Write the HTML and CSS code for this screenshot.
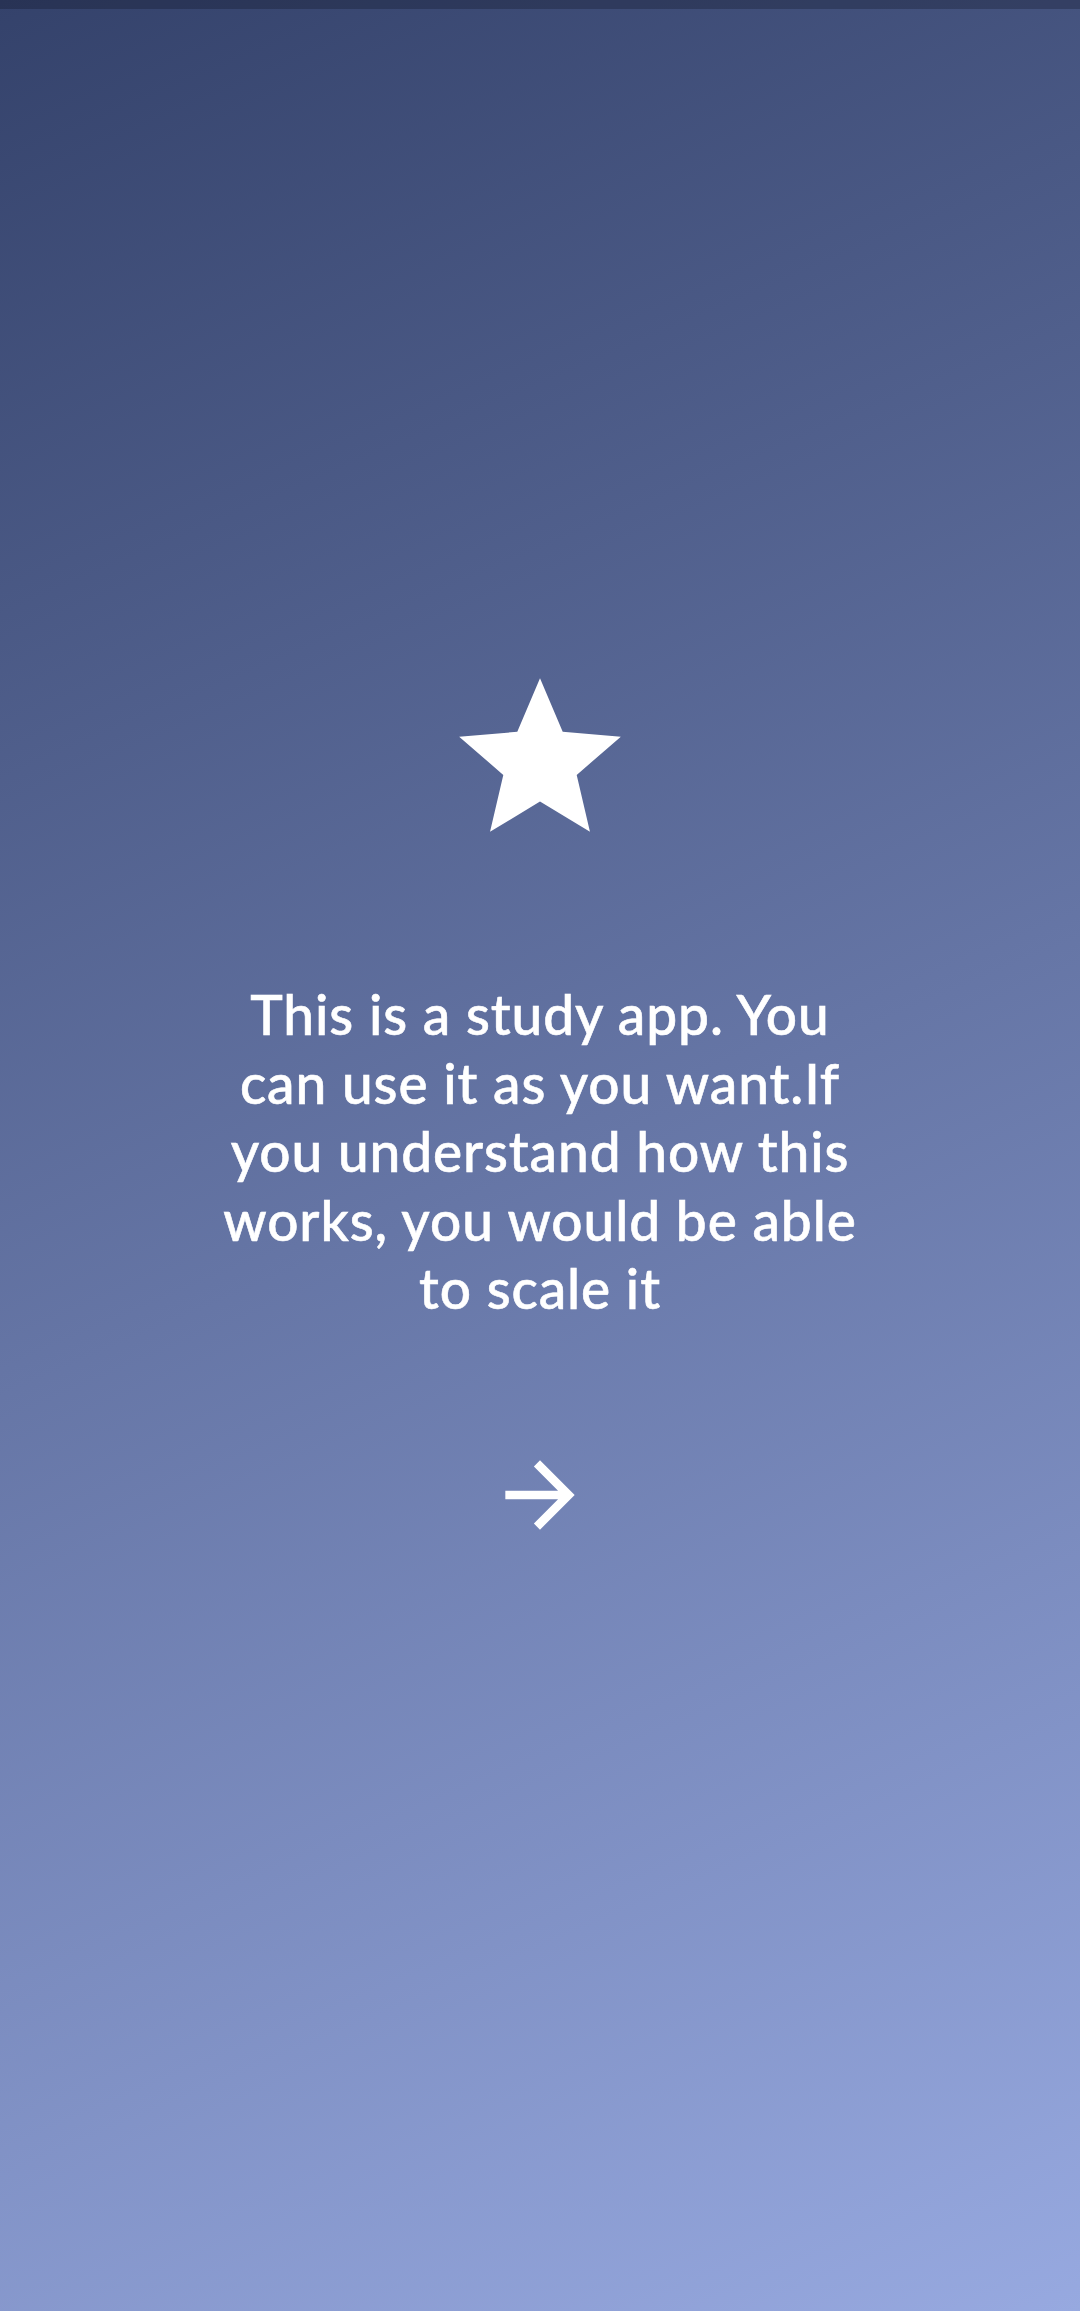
FILE: index.html
```html
<!DOCTYPE html>
<html lang="en">
<head>
<meta charset="utf-8">
<title>Study app</title>
<link rel="stylesheet" href="styles.css">
</head>
<body>
<div class="screen">
  <div class="status-bar"></div>
  <main class="intro">
    <svg class="star" viewBox="0 0 24 24" aria-hidden="true">
      <path d="M12 17.27L18.18 21l-1.64-7.03L22 9.24l-7.19-.61L12 2 9.19 8.63 2 9.24l5.46 4.73L5.82 21z" fill="#fff"/>
    </svg>
    <p class="message">This is a study app. You can use it as you want.If you understand how this works, you would be able to scale it</p>
    <button class="next" aria-label="Next">
      <svg viewBox="0 0 24 24" aria-hidden="true">
        <path d="M12 4l-1.41 1.41L16.17 11H4v2h12.17l-5.58 5.59L12 20l8-8z" fill="#fff"/>
      </svg>
    </button>
  </main>
</div>
</body>
</html>
```
FILE: styles.css
```css
html, body {
  margin: 0;
  padding: 0;
}
body {
  width: 1080px;
  height: 2311px;
  overflow: hidden;
  font-family: "Lato", "Noto Sans", sans-serif;
}
.screen {
  height: 2311px;
  display: flex;
  flex-direction: column;
  background: linear-gradient(157deg, #34426b 0%, #97a9e0 100%);
}
.status-bar {
  height: 9px;
  background: rgba(10, 14, 30, 0.28);
}
.intro {
  display: flex;
  flex-direction: column;
  align-items: center;
  padding-top: 653px;
}
.star {
  width: 194px;
  height: 194px;
  display: block;
}
.message {
  margin: 124px 0 0;
  width: 650px;
  text-align: center;
  color: #fff;
  font-size: 55px;
  line-height: 68.5px;
  font-weight: 500;
  letter-spacing: 0.9px;
  -webkit-text-stroke: 0.6px #fff;
}
.next {
  margin-top: 120px;
  width: 104px;
  height: 104px;
  padding: 0;
  border: 0;
  background: none;
}
.next svg {
  width: 104px;
  height: 104px;
  display: block;
}
```
